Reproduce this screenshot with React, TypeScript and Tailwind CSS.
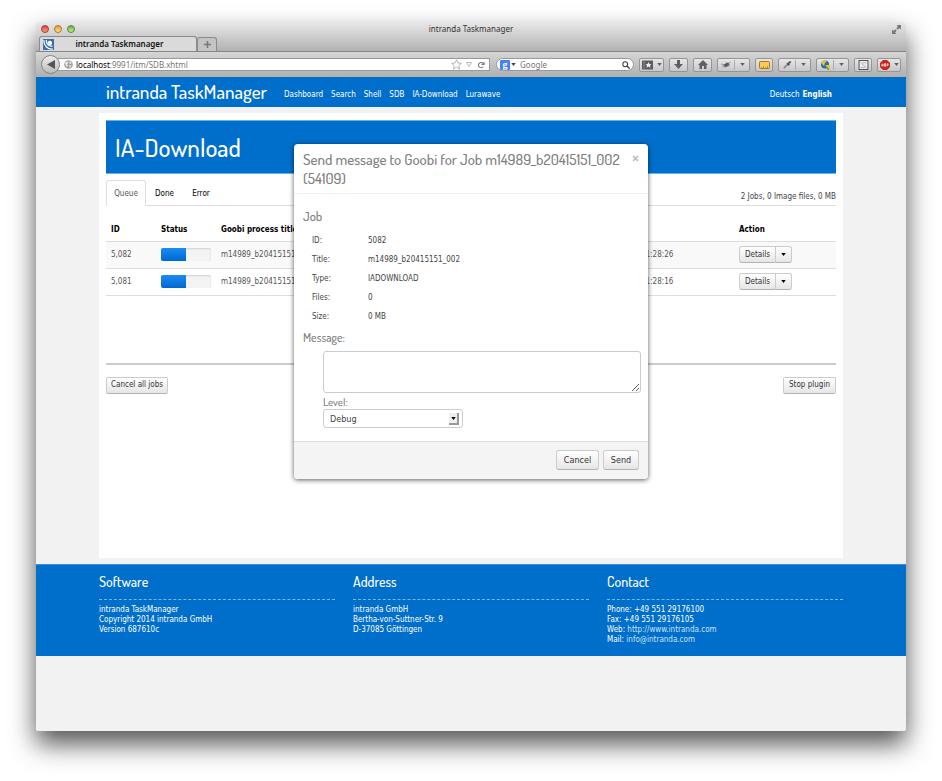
import type { ReactNode } from "react";

const heading = "font-['Dosis','Liberation_Sans_Narrow','Roboto_Condensed',sans-serif] font-medium";

const jobs = [
  { id: "5,082", title: "m14989_b20415151_002", time: "11:28:26" },
  { id: "5,081", title: "m14989_b20415151_001", time: "11:28:16" },
];

const details = [
  ["ID:", "5082"],
  ["Title:", "m14989_b20415151_002"],
  ["Type:", "IADOWNLOAD"],
  ["Files:", "0"],
  ["Size:", "0 MB"],
];

function Caret({ className = "" }: { className?: string }) {
  return (
    <svg viewBox="0 0 6 4" className={`h-[3px] w-[5px] shrink-0 ${className}`} aria-hidden="true">
      <path d="M0 0h6L3 4z" fill="currentColor" />
    </svg>
  );
}

function ToolButton({ label, width, menu, split, children }: { label: string; width: string; menu?: boolean; split?: boolean; children: ReactNode }) {
  return (
    <button
      aria-label={label}
      className={`flex h-[14px] shrink-0 items-center justify-center rounded-[2px] border border-[#959595] bg-linear-to-b from-[#e6e6e6] to-[#c8c8c8] text-[#606060] ${width}`}
    >
      <span className="flex flex-1 items-center justify-center">{children}</span>
      {split && <span className="h-[10px] w-px bg-[#aaa]" />}
      {menu && (
        <span className={`flex items-center justify-center ${split ? "w-[14px]" : "w-[8px]"}`}>
          <Caret />
        </span>
      )}
    </button>
  );
}

function TitleBar() {
  return (
    <div className="h-[30px] border-b border-[#858585] bg-linear-to-b from-[#e8e8e8] to-[#b2b2b2]">
      <div className="flex h-[14px] items-center px-[5px]">
        <div className="flex flex-1 gap-[5px]">
          <button aria-label="Close window" className="h-[8px] w-[8px] rounded-full border border-[#9d3b35] bg-linear-to-b from-[#d9433c] to-[#ff9a8e]" />
          <button aria-label="Minimise window" className="h-[8px] w-[8px] rounded-full border border-[#a8762a] bg-linear-to-b from-[#e5a035] to-[#ffe084]" />
          <button aria-label="Zoom window" className="h-[8px] w-[8px] rounded-full border border-[#568538] bg-linear-to-b from-[#6fae4a] to-[#c3ee94]" />
        </div>
        <h1 className="text-[8px] text-[#333]">intranda Taskmanager</h1>
        <div className="flex flex-1 justify-end">
          <button aria-label="Full screen" className="text-[#777]">
            <svg viewBox="0 0 9 9" className="h-[9px] w-[9px]" aria-hidden="true">
              <path d="M4.500 0H9v4.500L7.500 3 5.800 4.700 4.300 3.200 6 1.500zM0 4.500 1.500 6l1.700-1.700 1.500 1.500L3 7.500 4.500 9H0z" fill="currentColor" />
            </svg>
          </button>
        </div>
      </div>
      <div className="flex h-[15px] items-end px-[3px]">
        <div className="flex h-[15px] w-[158px] items-center rounded-t-[3px] border border-b-0 border-[#8a8a8a] bg-[#dadada] px-[3px]">
          <svg viewBox="0 0 11 11" className="h-[11px] w-[11px]" aria-hidden="true">
            <rect width="11" height="11" fill="#3d6dab" />
            <path d="M1 1a8 8 0 0 0 9 9M3.500 1a5 5 0 0 0 6 6" stroke="#fff" strokeWidth="1.200" fill="none" />
            <circle cx="6.800" cy="4" r="2.300" fill="#fff" />
          </svg>
          <span className="flex-1 pr-[8px] text-center text-[8px] font-semibold text-[#111]">intranda Taskmanager</span>
        </div>
        <button aria-label="New tab" className="flex h-[14px] w-[20px] items-center justify-center rounded-t-[3px] border border-b-0 border-[#8a8a8a] bg-[#c4c4c4]">
          <svg viewBox="0 0 7 7" className="h-[7px] w-[7px]" aria-hidden="true">
            <path d="M3.500 0v7M0 3.500h7" stroke="#777" strokeWidth="1.500" />
          </svg>
        </button>
      </div>
    </div>
  );
}

function Toolbar() {
  return (
    <div className="flex h-[25px] items-center bg-linear-to-b from-[#d6d6d6] to-[#b0b0b0] px-[5px]">
      <button aria-label="Back" className="z-10 flex h-[19px] w-[19px] shrink-0 items-center justify-center rounded-full border border-[#858585] bg-linear-to-b from-[#ededed] to-[#bcbcbc]">
        <svg viewBox="0 0 9 10" className="h-[9px] w-[8px]" aria-hidden="true">
          <path d="M9 0v10L0 5z" fill="#555" />
        </svg>
      </button>
      <div className="-ml-[3px] flex h-[13px] flex-1 items-center border border-[#999] bg-white pr-[4px] pl-[6px]">
        <svg viewBox="0 0 9 9" className="h-[9px] w-[9px] shrink-0" aria-hidden="true">
          <circle cx="4.500" cy="4.500" r="4.300" fill="#a0a0a0" />
          <path d="M1 3l2-1.500 1.500 1L3 4.500l1 1.500L2.500 7zM5.500 1l2 1.500L7 4 5.500 3.500zM5 5l2.500.5L6 8z" fill="#ededed" />
        </svg>
        <span className="flex-1 pl-[3px] text-[8px] text-[#777]">
          <span className="text-black">localhost</span>:9991/itm/SDB.xhtml
        </span>
        <svg viewBox="0 0 11 11" className="h-[11px] w-[11px]" aria-hidden="true">
          <path d="m5.500.8 1.400 3.200 3.500.3-2.700 2.300.9 3.500-3.100-1.900-3.100 1.900.9-3.500L.6 4.300 4.100 4z" fill="none" stroke="#999" strokeWidth=".7" />
        </svg>
        <svg viewBox="0 0 6 5" className="ml-[4px] h-[5px] w-[6px]" aria-hidden="true">
          <path d="M.5.500h5L3 4.500z" fill="none" stroke="#aaa" strokeWidth=".8" />
        </svg>
        <svg viewBox="0 0 9 9" className="ml-[5px] h-[8px] w-[8px]" aria-hidden="true">
          <path d="M7 6.500A3 3 0 1 1 6.800 2.500" fill="none" stroke="#777" strokeWidth="1.200" />
          <path d="M8.500.5v4h-4z" fill="#777" />
        </svg>
      </div>
      <div className="ml-[6px] flex h-[13px] w-[138px] items-center rounded-full border border-[#999] bg-white px-[3px]">
        <span className="flex h-[10px] w-[10px] items-center justify-center rounded-[1px] bg-[#4382f2] font-['Liberation_Serif',serif] text-[10px] leading-none font-bold text-white">g</span>
        <Caret className="ml-[1px] text-[#444]" />
        <input aria-label="Search with Google" placeholder="Google" className="ml-[4px] w-full min-w-0 flex-1 bg-transparent text-[8px] outline-none placeholder:text-[#777]" />
        <svg viewBox="0 0 8 8" className="h-[8px] w-[8px]" aria-hidden="true">
          <circle cx="3.200" cy="3.200" r="2.400" fill="none" stroke="#444" strokeWidth="1.100" />
          <path d="m5 5 2.600 2.600" stroke="#444" strokeWidth="1.400" />
        </svg>
      </div>
      <div className="ml-[5px] flex gap-[5px]">
        <ToolButton label="Bookmarks" width="w-[25px]" menu>
          <svg viewBox="0 0 11 10" className="h-[10px] w-[11px]" aria-hidden="true">
            <path d="M0 .5h11v9H0z" fill="#5c5c5c" />
            <path d="M2 1v8" stroke="#aaa" strokeWidth=".6" />
            <path d="m6.500 2 .9 2 2.100.2L8 5.600l.5 2.100-2-1.100-2 1.100.5-2.100-1.500-1.400 2.100-.2z" fill="#eee" />
          </svg>
        </ToolButton>
        <ToolButton label="Downloads" width="w-[19px]">
          <svg viewBox="0 0 9 9" className="h-[9px] w-[9px]" aria-hidden="true">
            <path d="M3 0h3v4h3L4.500 9 0 4h3z" fill="currentColor" />
          </svg>
        </ToolButton>
        <ToolButton label="Home" width="w-[19px]">
          <svg viewBox="0 0 10 9" className="h-[9px] w-[10px]" aria-hidden="true">
            <path d="M5 0l5 5H8.500v4H6V6H4v3H1.500V5H0z" fill="currentColor" />
          </svg>
        </ToolButton>
        <ToolButton label="Firebug" width="w-[33px]" menu split>
          <svg viewBox="0 0 10 8" className="h-[8px] w-[10px]" aria-hidden="true">
            <ellipse cx="5.500" cy="3.800" rx="3" ry="1.700" transform="rotate(-20 5.500 3.800)" fill="#555" />
            <path d="M0 3l4 1M1 6l3-1.500M4 7l1-2M7 6V3M9 4 7 3M5 1l1 2M9.500 1 7 2.500" stroke="#777" strokeWidth=".7" />
          </svg>
        </ToolButton>
        <ToolButton label="Measure" width="w-[18px]">
          <svg viewBox="0 0 11 8" className="h-[8px] w-[11px]" aria-hidden="true">
            <rect x=".5" y=".5" width="10" height="7" rx=".8" fill="#ffc956" stroke="#a8791d" />
            <path d="M2.500 7V6M4.500 7V5M6.500 7V6M8.500 7V5" stroke="#a8791d" strokeWidth=".7" />
          </svg>
        </ToolButton>
        <ToolButton label="Color picker" width="w-[33px]" menu split>
          <svg viewBox="0 0 10 10" className="h-[9px] w-[9px]" aria-hidden="true">
            <path d="M1 9l4.500-4.500" stroke="#888" strokeWidth="1.800" />
            <path d="M4.500 3.500l2.500 2.500M6 4l2.500-2.500" stroke="#555" strokeWidth="2.200" />
          </svg>
        </ToolButton>
        <ToolButton label="Web tools" width="w-[33px]" menu split>
          <svg viewBox="0 0 10 10" className="h-[10px] w-[10px]" aria-hidden="true">
            <circle cx="5" cy="4.500" r="4" fill="#2b67b5" />
            <path d="M1 3a4 4 0 0 1 6-2L5 3l-1 3z" fill="#e9bf3e" />
            <path d="M5 5h5v5z" fill="#f0c22f" />
            <path d="M6 7l3 3" stroke="#59a13c" strokeWidth="1.300" />
          </svg>
        </ToolButton>
        <ToolButton label="NoSquint" width="w-[18px]">
          <svg viewBox="0 0 11 11" className="h-[10px] w-[11px]" aria-hidden="true">
            <rect x=".6" y=".6" width="9.800" height="9.800" fill="#eee" stroke="#444" />
            <path d="M7.500 3.500C6 2 3 3.500 4.500 5s4 1 2.500 3H3M2 2l1 1M9 9 8 8M2 9l1-1M9 2 8 3" fill="none" stroke="#888" strokeWidth=".7" />
          </svg>
        </ToolButton>
        <ToolButton label="Adblock Plus" width="w-[24px]" menu>
          <svg viewBox="0 0 11 11" className="h-[10px] w-[10px]" aria-hidden="true">
            <path d="M3.300 0h4.400L11 3.300v4.400L7.700 11H3.300L0 7.700V3.300z" fill="#c5281c" />
            <path d="M2 7V4.500h1.500V7M2 6h1.500M5 4v3h1.200V4zM5 5.500h1.200M7.800 7V4.200H9v1.600H7.800" fill="none" stroke="#fff" strokeWidth=".7" />
          </svg>
        </ToolButton>
      </div>
    </div>
  );
}

const greyButton =
  "border border-[#cccccc] border-b-[#b3b3b3] bg-linear-to-b from-white to-[#e6e6e6] text-[#333] flex items-center justify-center";

function MessageDialog() {
  return (
    <div
      role="dialog"
      aria-labelledby="dialog-title"
      className="absolute top-[67px] left-1/2 w-[354px] -translate-x-1/2 overflow-hidden rounded-[4px] bg-white shadow-[0_1px_5px_rgba(0,0,0,0.65)]"
    >
      <div className="flex items-start border-b border-[#eee] px-[9px] pt-[6px] pb-[5px]">
        <h2 id="dialog-title" className={`${heading} flex-1 text-[15px] leading-[19px] whitespace-nowrap text-[#808080]`}>
          Send message to Goobi for Job m14989_b20415151_002
          <br />
          (54109)
        </h2>
        <button aria-label="Close" className="mt-[5px] text-[#bbb]">
          <svg viewBox="0 0 7 7" className="h-[7px] w-[7px]" aria-hidden="true">
            <path d="m1 1 5 5M6 1 1 6" stroke="currentColor" strokeWidth="1.600" />
          </svg>
        </button>
      </div>
      <form>
        <div className="pt-[13px] pr-[7px] pb-[13px] pl-[9px]">
          <h3 className={`${heading} text-[13px] leading-[18px] text-[#808080]`}>Job</h3>
          <dl className="grid grid-cols-[56px_1fr] pt-[6px] pl-[9px] leading-[19px] text-[#444]">
            {details.map(([name, value]) => (
              <div key={name} className="contents">
                <dt>{name}</dt>
                <dd>{value}</dd>
              </div>
            ))}
          </dl>
          <label htmlFor="message" className={`${heading} block pt-[3px] text-[12px] leading-[18px] text-[#808080]`}>
            Message:
          </label>
          <div className="pt-[4px] pl-[20px]">
            <textarea id="message" className="block h-[42px] w-full rounded-[3px] border border-[#ccc] p-[3px] outline-none" />
            <label htmlFor="level" className={`${heading} block pt-[3px] text-[11px] leading-[13px] text-[#808080]`}>
              Level:
            </label>
            <div className="relative w-[140px]">
              <select id="level" className="block h-[19px] w-full appearance-none rounded-[3px] border border-[#ccc] bg-white pl-[6px] text-[9px] text-[#444]">
                <option>Debug</option>
                <option>Info</option>
                <option>Warn</option>
                <option>Error</option>
              </select>
              <span className="pointer-events-none absolute top-[4px] right-[4px] flex h-[12px] w-[10px] items-center justify-center border-r-2 border-b-2 border-[#999] bg-[#eee] text-black">
                <Caret />
              </span>
            </div>
          </div>
        </div>
        <div className="flex justify-end gap-[4px] border-t border-[#ddd] bg-[#f4f4f4] px-[9px] pt-[8px] pb-[9px] text-[9px]">
          <button type="button" className={`${greyButton} h-[20px] w-[43px] rounded-[3px]`}>Cancel</button>
          <button type="button" className={`${greyButton} h-[20px] w-[36px] rounded-[3px]`}>Send</button>
        </div>
      </form>
    </div>
  );
}

function JobTable() {
  return (
    <table className="w-full table-fixed border-collapse text-left text-[#555]">
      <thead>
        <tr className="h-[35px] border-b border-[#ddd] text-black">
          <th className="w-[50px] pt-[14px] pl-[5px]">ID</th>
          <th className="w-[60px] pt-[14px] pl-[5px]">Status</th>
          <th className="pt-[14px] pl-[5px]">Goobi process title</th>
          <th className="w-[93px] pt-[14px]" aria-label="Time" />
          <th className="w-[102px] pt-[14px] pl-[5px]">Action</th>
        </tr>
      </thead>
      <tbody>
        {jobs.map((job) => (
          <tr key={job.id} className="h-[27px] border-b border-[#ddd] odd:bg-[#f9f9f9]">
            <td className="pl-[5px]">{job.id}</td>
            <td className="pl-[5px]">
              <div role="progressbar" aria-label={`Status of job ${job.id}`} aria-valuenow={50} className="h-[13px] w-[50px] overflow-hidden rounded-[2px] bg-[#f4f4f4] shadow-[inset_0_1px_2px_rgba(0,0,0,0.15)]">
                <div className="h-full w-1/2 bg-linear-to-b from-[#1a8cf5] to-[#0068cc]" />
              </div>
            </td>
            <td className="pl-[5px]">{job.title}</td>
            <td>{job.time}</td>
            <td className="pl-[5px]">
              <div className="flex">
                <button className={`${greyButton} h-[17px] w-[37px] rounded-l-[3px]`}>Details</button>
                <button aria-label="More actions" className={`${greyButton} -ml-px h-[17px] w-[17px] rounded-r-[3px]`}>
                  <Caret className="text-black" />
                </button>
              </div>
            </td>
          </tr>
        ))}
      </tbody>
    </table>
  );
}

function FooterColumn({ title, children }: { title: string; children: ReactNode }) {
  return (
    <section>
      <h2 className={`${heading} text-[14px] leading-[18px]`}>{title}</h2>
      <div className="mt-[8px] border-t border-dashed border-[#7fb7e5] pt-[5px]">{children}</div>
    </section>
  );
}

export default function App() {
  return (
    <div className="flex min-h-screen flex-col overflow-hidden bg-white px-[36px] pt-[22px] pb-[50px] font-['DejaVu_Sans_Condensed','DejaVu_Sans',sans-serif] text-[8px] leading-[12px]">
      <div className="flex flex-1 flex-col overflow-hidden rounded-t-[4px] rounded-b-[2px] bg-[#f2f2f2] shadow-[0_13px_26px_rgba(0,0,0,0.68)]">
        <div className="font-['Noto_Sans','DejaVu_Sans',sans-serif]">
          <TitleBar />
          <Toolbar />
        </div>
        <div className="relative flex flex-1 flex-col">
          <header className="bg-[#006fcb] text-white">
            <div className="mx-auto flex h-[30px] max-w-[744px] items-center pr-[11px] pl-[7px]">
              <a href="#home" className={`${heading} text-[19px] leading-[26px]`}>intranda TaskManager</a>
              <nav className="flex flex-1 gap-[8px] pt-[6px] pl-[17px]">
                <a href="#dashboard">Dashboard</a>
                <a href="#search">Search</a>
                <a href="#shell">Shell</a>
                <a href="#sdb">SDB</a>
                <a href="#ia-download">IA-Download</a>
                <a href="#lurawave">Lurawave</a>
              </nav>
              <div className="flex gap-[3px] pt-[6px]">
                <a href="#de">Deutsch</a>
                <a href="#en" className="font-bold">English</a>
              </div>
            </div>
          </header>
          <main className="mx-auto my-[6px] h-[445px] w-full max-w-[744px] bg-white p-[7px]">
            <div className="flex h-[54px] items-center border-y border-[#6fb0e4] bg-[#006fcb] px-[9px]">
              <h1 className={`${heading} text-[25px] leading-[32px] text-white`}>IA-Download</h1>
            </div>
            <div className="mt-[6px] flex h-[26px] border-b border-[#ddd]">
              <nav className="flex flex-1 text-black">
                <a href="#queue" className="-mb-px h-[26px] w-[40px] rounded-t-[3px] border border-b-0 border-[#ddd] bg-white pt-[7px] text-center text-[#555]">Queue</a>
                <a href="#done" className="w-[37px] pt-[8px] text-center">Done</a>
                <a href="#error" className="w-[36px] pt-[8px] text-center">Error</a>
              </nav>
              <p className="pt-[11px] text-[#444]">2 Jobs, 0 Image files, 0 MB</p>
            </div>
            <JobTable />
            <hr className="mt-[67px] border-t-2 border-[#ccc]" />
            <div className="mt-[12px] flex justify-between">
              <button className={`${greyButton} h-[17px] w-[62px] rounded-[2px]`}>Cancel all jobs</button>
              <button className={`${greyButton} h-[17px] w-[53px] rounded-[2px]`}>Stop plugin</button>
            </div>
          </main>
          <footer className="border-t border-[#3b8fd8] bg-[#006fcb] pb-[11px] text-white">
            <div className="mx-auto grid max-w-[744px] grid-cols-3 gap-[18px] pt-[8px] leading-[10px]">
              <FooterColumn title="Software">
                <p>intranda TaskManager</p>
                <p>Copyright 2014 intranda GmbH</p>
                <p>Version 687610c</p>
              </FooterColumn>
              <FooterColumn title="Address">
                <p>intranda GmbH</p>
                <p>Bertha-von-Suttner-Str. 9</p>
                <p>D-37085 Göttingen</p>
              </FooterColumn>
              <FooterColumn title="Contact">
                <p>Phone: +49 551 29176100</p>
                <p>Fax: +49 551 29176105</p>
                <p>Web: <a href="http://www.intranda.com" className="text-[#cce2f5]">http://www.intranda.com</a></p>
                <p>Mail: <a href="mailto:info@intranda.com" className="text-[#cce2f5]">info@intranda.com</a></p>
              </FooterColumn>
            </div>
          </footer>
          <MessageDialog />
        </div>
      </div>
    </div>
  );
}
